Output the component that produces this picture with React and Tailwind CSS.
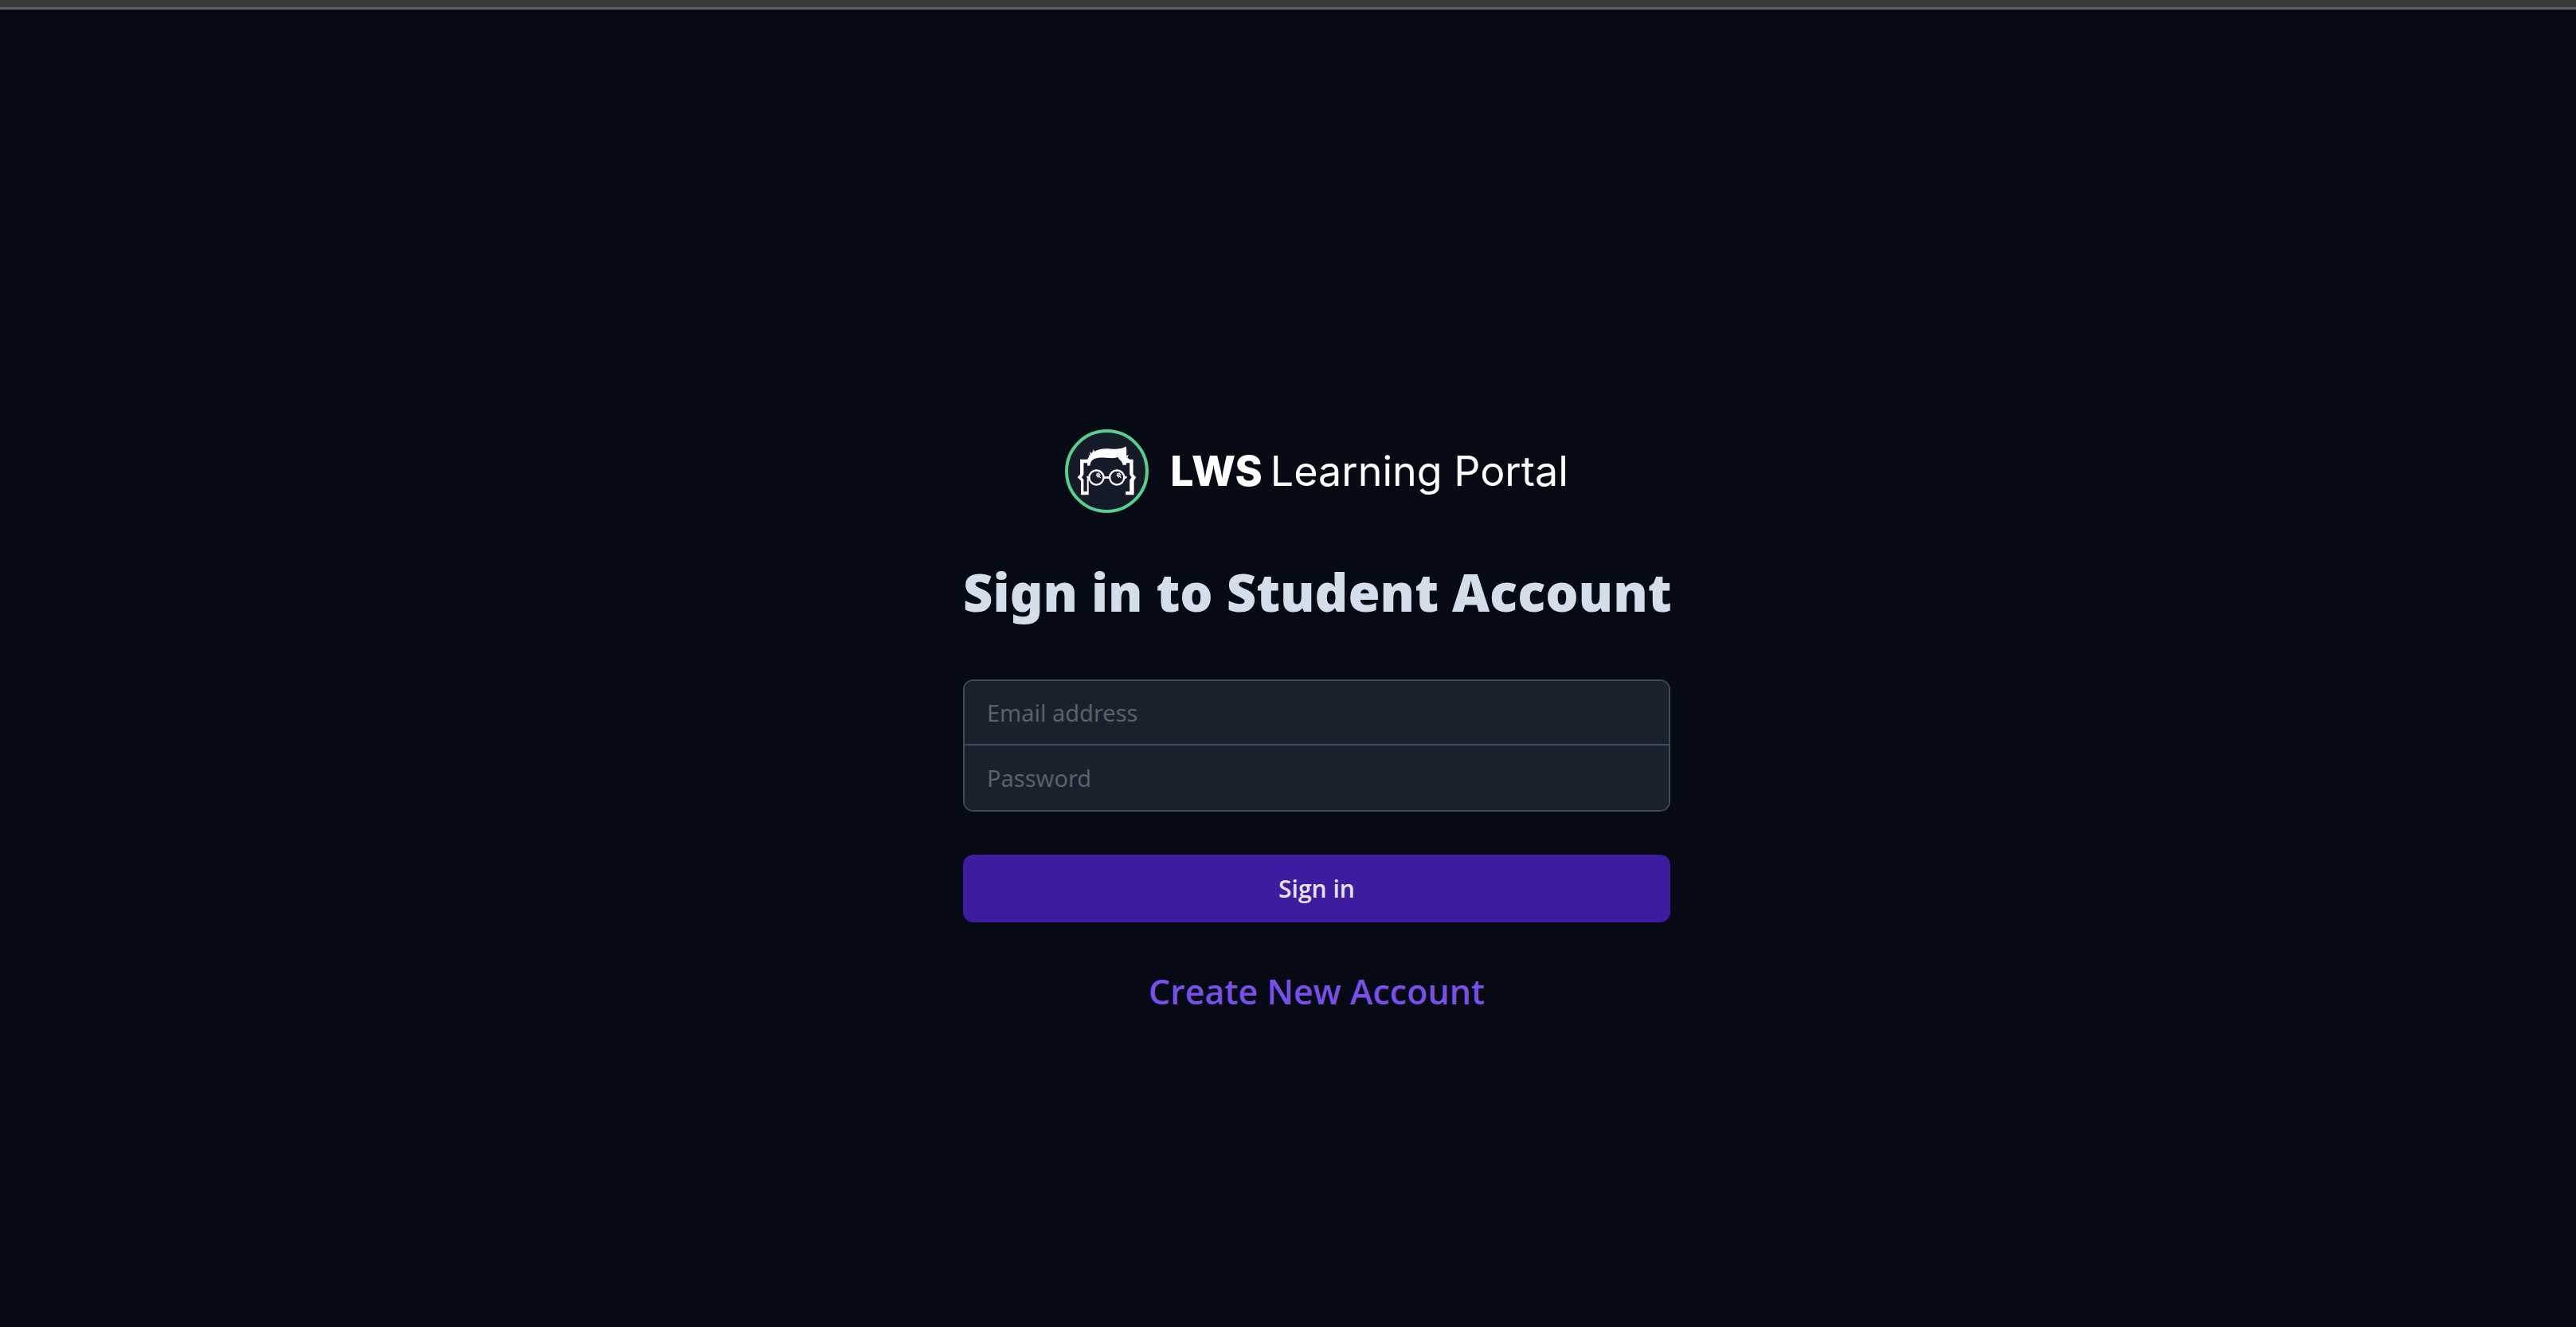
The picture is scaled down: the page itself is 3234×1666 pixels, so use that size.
function LogoMark() {
  return (
    <svg viewBox="51 56 314 314" className="size-[105px] shrink-0" aria-hidden="true">
      <circle cx="208" cy="213" r="151" fill="#161b29" stroke="#56d091" strokeWidth="12" />
      <g fill="#fff">
        <path d="M108 169H137V182H121V226L114 236L121 246V289H134V242L140 238V302H111V249L98 236L108 225Z" />
        <path d="M307 169H280V182H294V226L301 236L294 246V289H279V302H310V249L318 236L307 225Z" />
        <path d="M135 193V171C136 165 140 161 143 158L138 153L147 153C144 149 144 144 147 140L150 147C154 143 157 138 158 131C160 134 161 137 161 140C174 130 196 127 222 129C246 131 266 129 280 120C283 131 283 143 281 155L290 152L285 163L294 168L281 173V190L268 190C267 181 262 173 254 168L250 160C244 163 234 165 222 164C196 161 176 162 163 166C152 171 146 179 145 192Z" />
        <path d="M133 231L142 234V242L133 239Z" />
        <path d="M283 231L274 234V242L283 239Z" />
        <rect x="195" y="233" width="25" height="8" />
      </g>
      <g fill="none" stroke="#fff" strokeWidth="7">
        <circle cx="169" cy="237" r="27" />
        <circle cx="246" cy="237" r="27" />
        <path d="M170 221L185 239M176 219L184 229M168 226L177 237M247 221L262 239M253 219L261 229M245 226L254 237" strokeWidth="4" />
      </g>
    </svg>
  );
}

const fieldClass =
  "block h-[81px] w-full bg-[#19212d] px-7 text-[29px] text-slate-200 outline-none placeholder:text-[#5d6064] placeholder:opacity-100";

export default function App() {
  return (
    <div className="flex min-h-screen flex-col bg-[#050a14] font-['Noto_Sans','Open_Sans',sans-serif]">
      <div className="h-3 border-b-[3px] border-[#5f6366] bg-[#38393b]" />
      <main className="flex flex-1 flex-col items-center justify-center pt-[136px] pl-[72px]">
        <div className="flex w-full max-w-[888px] flex-col">
          <div className="flex items-center justify-center gap-[27px] font-['Inter',sans-serif] text-[52px] leading-[64px] text-white">
            <LogoMark />
            <p className="flex gap-[10px]">
              <span className="font-extrabold">LWS</span>
              <span className="font-normal">Learning Portal</span>
            </p>
          </div>
          <h1 className="mt-[59px] text-center text-[65px] leading-[80px] font-black whitespace-nowrap text-[#d3deea]">
            Sign in to Student Account
          </h1>
          <form className="mt-[70px]" onSubmit={(e) => e.preventDefault()}>
            <div className="divide-y-2 divide-[#3f4a5f] overflow-hidden rounded-[13px] border-2 border-[#3f4a5f]">
              <input type="email" aria-label="Email address" placeholder="Email address" className={fieldClass} />
              <input type="password" aria-label="Password" placeholder="Password" className={fieldClass} />
            </div>
            <button type="submit" className="mt-[54px] h-[85px] w-full rounded-[13px] bg-[#3d1ca0] font-['Open_Sans',sans-serif] text-[30px] font-semibold text-[#e8e2f4]">
              Sign in
            </button>
          </form>
          <a href="#register" className="mt-[57px] self-center font-['Open_Sans',sans-serif] text-[43px] leading-[60px] font-semibold text-[#7850e8]">
            Create New Account
          </a>
        </div>
      </main>
    </div>
  );
}
